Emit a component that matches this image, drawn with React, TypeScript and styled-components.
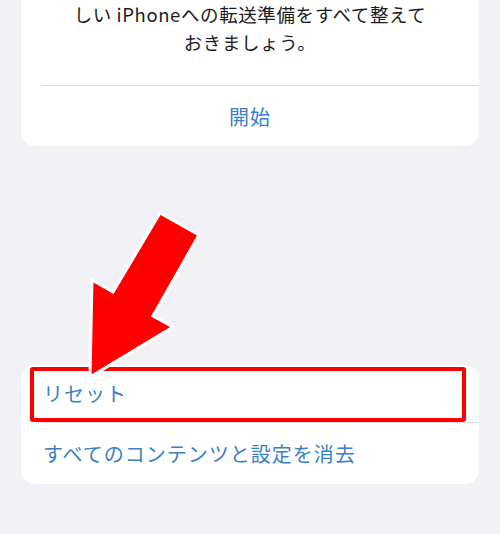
import React from 'react';
import styled, { createGlobalStyle } from 'styled-components';

const GlobalStyle = createGlobalStyle`
  html, body {
    margin: 0;
    padding: 0;
    background: #f1f1f6;
  }
  body {
    font-family: "Noto Sans CJK JP", "Noto Sans", sans-serif;
    -webkit-font-smoothing: antialiased;
  }
`;

const Screen = styled.div`
  position: relative;
  width: 500px;
  height: 534px;
  overflow: hidden;
  background: #f1f1f6;
  display: flex;
  flex-direction: column;
  gap: 219px;
`;

const Card = styled.section<{ $clipTop?: boolean }>`
  margin: 0 21px;
  background: #ffffff;
  border-radius: ${(p) => (p.$clipTop ? '0 0 14px 14px' : '14px')};
`;

const Description = styled.p`
  margin: 0;
  padding: 0 20px 29px;
  text-align: center;
  font-size: 18.5px;
  line-height: 28px;
  letter-spacing: 0.6px;
  color: #1c1c1e;
`;

const Row = styled.div<{ $center?: boolean; $height: number }>`
  position: relative;
  height: ${(p) => p.$height}px;
  display: flex;
  align-items: center;
  justify-content: ${(p) => (p.$center ? 'center' : 'flex-start')};
  padding: 0 22px;
  font-size: 20px;
  color: #3a80c9;
  letter-spacing: 1px;
`;

const Separator = styled.div`
  height: 1px;
  margin-left: 20px;
  background: #dcdce0;
`;

const Highlight = styled.div`
  position: absolute;
  top: 2px;
  left: 9px;
  right: 13px;
  bottom: 0;
  border: 4px solid #ff0000;
  border-radius: 3px;
  pointer-events: none;
`;

const Arrow = styled.svg`
  position: absolute;
  left: 0;
  top: 0;
  pointer-events: none;
`;

export default function App() {
  return (
    <>
      <GlobalStyle />
      <Screen>
        <Card $clipTop>
          <Description>
            しい iPhoneへの転送準備をすべて整えて
            <br />
            おきましょう。
          </Description>
          <Separator />
          <Row $center $height={60}>開始</Row>
        </Card>

        <Card>
          <Row $height={57}>
            リセット
            <Highlight />
          </Row>
          <Separator />
          <Row $height={61}>すべてのコンテンツと設定を消去</Row>
        </Card>

        <Arrow width="500" height="534" viewBox="0 0 500 534">
          <polygon
            points="160,213 199,235 153,316 173,327 90,377 92,280 113,292"
            fill="#ff0000"
            stroke="#ffffff"
            strokeWidth="3"
            strokeLinejoin="miter"
          />
        </Arrow>
      </Screen>
    </>
  );
}
